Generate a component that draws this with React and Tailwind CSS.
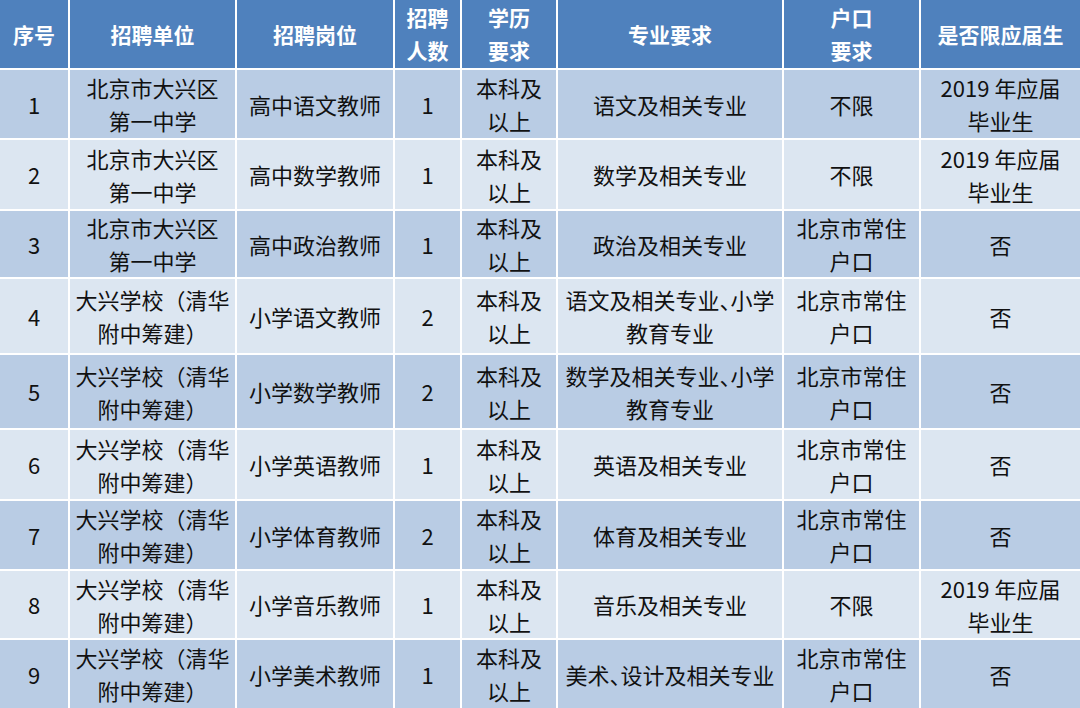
const headers = [
  ["序号"],
  ["招聘单位"],
  ["招聘岗位"],
  ["招聘", "人数"],
  ["学历", "要求"],
  ["专业要求"],
  ["户口", "要求"],
  ["是否限应届生"],
];

const school1 = ["北京市大兴区", "第一中学"];
const school2 = ["大兴学校（清华", "附中筹建）"];
const degree = ["本科及", "以上"];
const hukou = ["北京市常住", "户口"];
const fresh = ["2019 年应届", "毕业生"];

const rows = [
  ["1", school1, "高中语文教师", "1", degree, "语文及相关专业", "不限", fresh],
  ["2", school1, "高中数学教师", "1", degree, "数学及相关专业", "不限", fresh],
  ["3", school1, "高中政治教师", "1", degree, "政治及相关专业", hukou, "否"],
  ["4", school2, "小学语文教师", "2", degree, ["语文及相关专业、小学", "教育专业"], hukou, "否"],
  ["5", school2, "小学数学教师", "2", degree, ["数学及相关专业、小学", "教育专业"], hukou, "否"],
  ["6", school2, "小学英语教师", "1", degree, "英语及相关专业", hukou, "否"],
  ["7", school2, "小学体育教师", "2", degree, "体育及相关专业", hukou, "否"],
  ["8", school2, "小学音乐教师", "1", degree, "音乐及相关专业", "不限", fresh],
  ["9", school2, "小学美术教师", "1", degree, "美术、设计及相关专业", hukou, "否"],
];

// the 、 in the source is squeezed to half width
function Line({ text }) {
  const parts = text.split("、");
  return (
    <span className="whitespace-nowrap">
      {parts.map((p, i) => (
        <span key={i}>
          {p}
          {i < parts.length - 1 && <span className="tracking-[-11px]">、</span>}
        </span>
      ))}
    </span>
  );
}

function Cell({ value, className }) {
  const lines = Array.isArray(value) ? value : [value];
  return (
    <div className={`flex flex-col items-center justify-center text-center leading-[33px] ${className}`}>
      {lines.map((l, i) => (
        <Line key={i} text={l} />
      ))}
    </div>
  );
}

export default function App() {
  return (
    <div
      className="grid h-[708px] w-[1080px] gap-[2px] bg-white grid-cols-[68px_165px_156px_65px_94px_224px_135px_1fr] grid-rows-[68px_68px_69px_66px_74px_73px_69px_68px_67px_68px]"
      style={{ fontFamily: '"Noto Sans CJK SC", "Noto Sans", sans-serif' }}
    >
      {/* HEADER */}
      {headers.map((h, i) => (
        <Cell key={i} value={h} className="bg-[#4f81bd] text-[21px] font-bold text-white" />
      ))}

      {/* BODY */}
      {rows.map((r, ri) =>
        r.map((c, ci) => (
          <Cell
            key={`${ri}-${ci}`}
            value={c}
            className={`text-[22px] text-[#111] ${ri % 2 === 0 ? "bg-[#b9cce4]" : "bg-[#dce6f1]"}`}
          />
        ))
      )}
    </div>
  );
}
